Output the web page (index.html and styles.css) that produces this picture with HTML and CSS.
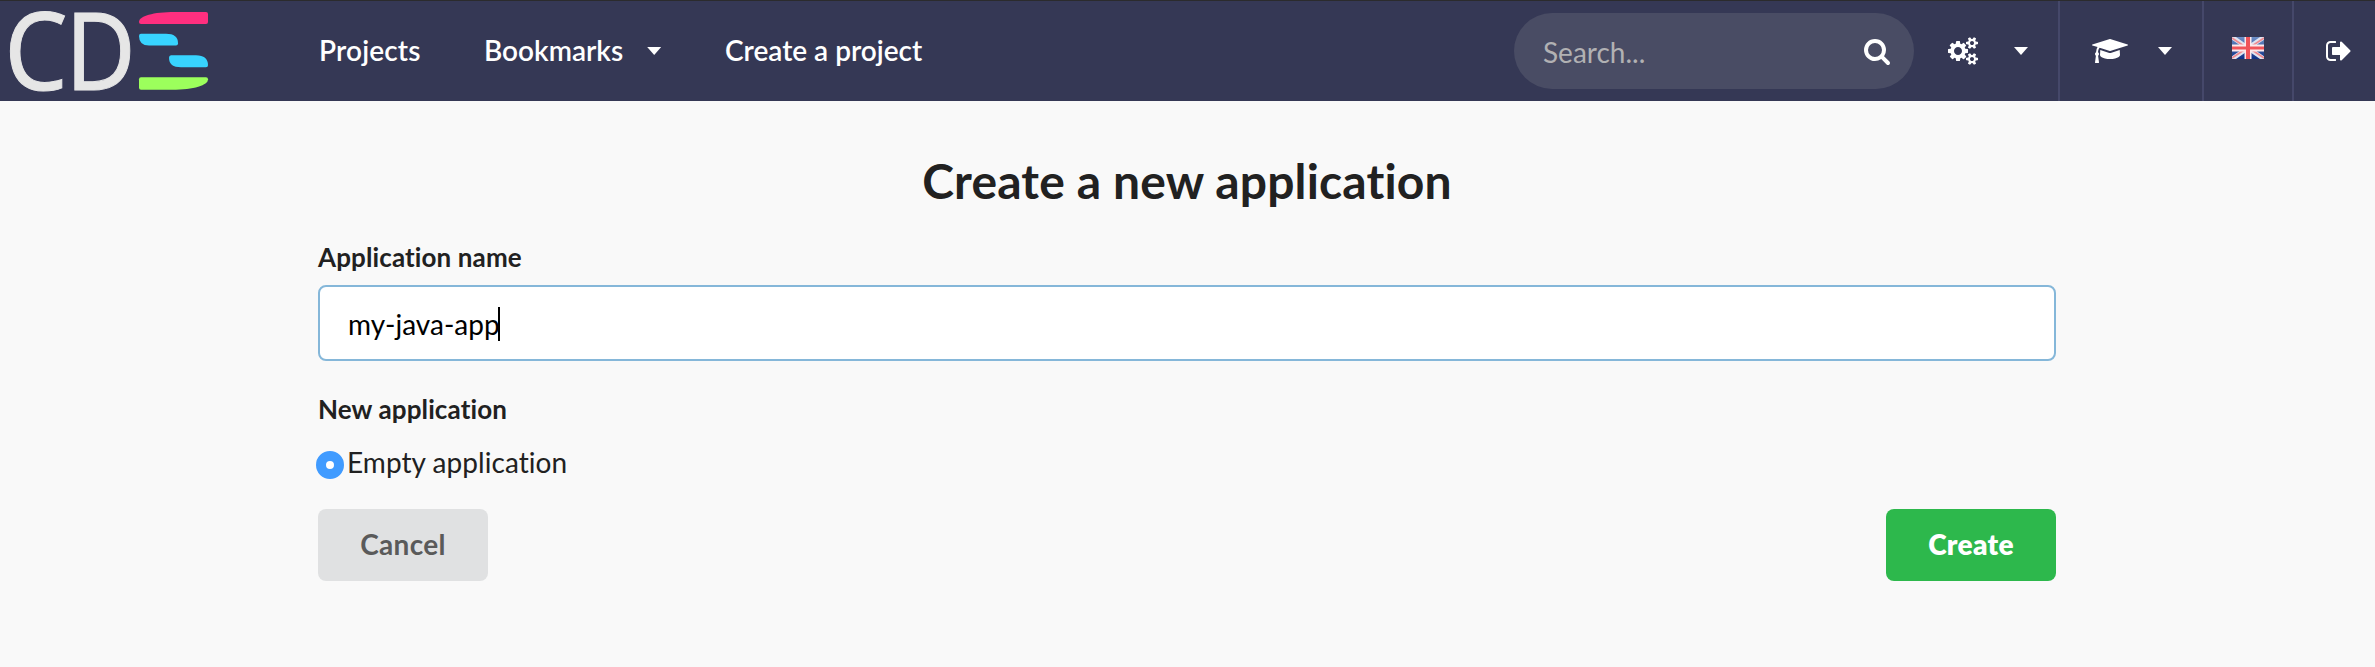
FILE: index.html
```
<!DOCTYPE html>
<html lang="en">
<head>
<meta charset="utf-8">
<title>Create a new application</title>
<link rel="stylesheet" href="styles.css">
</head>
<body>
<nav class="navbar">
  <a class="logo">
    <svg width="230" height="100" viewBox="0 1 230 100" role="img" aria-label="CDE">
      <text class="logo-letter" transform="translate(4.200 89.600) scale(.93 1)">C</text>
      <text class="logo-letter" transform="translate(65.500 89.600) scale(.89 1)">D</text>
      <path fill="#ff2f7f" d="M141 24q-2 0-2-2c0-6 14-10 36-10h31q2 0 2 2v8q0 2-2 2z"/>
      <path fill="#38d4ff" d="M141 33.700h25q12 0 12 9.500q0 2.300-2 2.300h-27q-10 0-10-9.500q0-2.300 2-2.300z"/>
      <path fill="#38d4ff" d="M171 55.300h25q12 0 12 10q0 2-2 2h-25q-12 0-12-9.500q0-2.500 2-2.500z"/>
      <path fill="#9cff5c" d="M141 77.300h65q2 0 2 2c0 6-14 10.500-36 10.500h-31q-2 0-2-2v-8.500q0-2 2-2z"/>
    </svg>
  </a>
  <div class="menu">
    <a class="item projects">Projects</a>
    <a class="item bookmarks">Bookmarks <i class="caret"></i></a>
    <a class="item create">Create a project</a>
  </div>
  <div class="menu-right">
    <div class="search">
      <span class="placeholder">Search...</span>
      <svg class="icon" width="28" height="28" viewBox="0 0 1792 1792"><path d="M1216 832q0-185-131.500-316.500T768 384 451.500 515.500 320 832t131.500 316.500T768 1280t316.500-131.500T1216 832zm512 832q0 52-38 90t-90 38q-54 0-90-38l-343-342q-179 124-399 124-143 0-273.500-55.500t-225-150-150-225T64 832t55.500-273.500 150-225 225-150T768 128t273.500 55.500 225 150 150 225T1472 832q0 220-124 399l343 343q37 37 37 90z"/></svg>
    </div>
    <a class="tool settings">
      <svg class="icon" width="30" height="28" viewBox="0 0 1920 1792"><path d="M896 896q0-106-75-181t-181-75-181 75-75 181 75 181 181 75 181-75 75-181zm768 512q0-52-38-90t-90-38-90 38-38 90q0 53 37.500 90.500t90.500 37.500 90.500-37.500 37.500-90.500zm0-1024q0-52-38-90t-90-38-90 38-38 90q0 53 37.500 90.500t90.500 37.500 90.500-37.500 37.500-90.500zm-384 421v185q0 10-7 19.500t-16 10.500l-155 24q-11 35-32 76 34 48 90 115 7 11 7 20 0 12-7 19-23 30-82.500 89.500t-78.500 59.500q-11 0-21-7l-115-90q-37 19-77 31-11 108-23 155-7 24-30 24h-186q-11 0-20-7.500t-10-17.500l-23-153q-34-10-75-31l-118 89q-7 7-20 7-11 0-21-8-144-133-144-160 0-9 7-19 10-14 41-53t47-61q-23-44-35-82l-152-24q-10-1-17-9.500t-7-19.500v-185q0-10 7-19.500t16-10.500l155-24q11-35 32-76-34-48-90-115-7-11-7-20 0-12 7-20 22-30 82-89t79-59q11 0 21 7l115 90q34-18 77-32 11-108 23-154 7-24 30-24h186q11 0 20 7.500t10 17.500l23 153q34 10 75 31l118-89q8-7 20-7 11 0 21 8 144 133 144 160 0 8-7 19-12 16-42 54t-45 60q23 48 34 82l152 23q10 2 17 10.500t7 19.500zm640 533v140q0 16-149 31-12 27-30 52 51 113 51 138 0 4-4 7-122 71-124 71-8 0-46-47t-52-68q-20 2-30 2t-30-2q-14 21-52 68t-46 47q-2 0-124-71-4-3-4-7 0-25 51-138-18-25-30-52-149-15-149-31v-140q0-16 149-31 13-29 30-52-51-113-51-138 0-4 4-7 4-2 35-20t59-34 30-16q8 0 46 46.500t52 67.500q20-2 30-2t30 2q51-71 92-112l6-2q4 0 124 70 4 3 4 7 0 25-51 138 17 23 30 52 149 15 149 31zm0-1024v140q0 16-149 31-12 27-30 52 51 113 51 138 0 4-4 7-122 71-124 71-8 0-46-47t-52-68q-20 2-30 2t-30-2q-14 21-52 68t-46 47q-2 0-124-71-4-3-4-7 0-25 51-138-18-25-30-52-149-15-149-31v-140q0-16 149-31 13-29 30-52-51-113-51-138 0-4 4-7 4-2 35-20t59-34 30-16q8 0 46 46.500t52 67.500q20-2 30-2t30 2q51-71 92-112l6-2q4 0 124 70 4 3 4 7 0 25-51 138 17 23 30 52 149 15 149 31z"/></svg>
      <i class="caret"></i>
    </a>
    <a class="tool learn">
      <svg class="icon" width="36" height="28" viewBox="0 0 2304 1792"><path d="M1774 836l18 316q4 69-82 128t-235 93.500-323 34.500-323-34.500-235-93.500-82-128l18-316 574 181q22 7 48 7t48-7zm530-324q0 23-22 31l-1120 352q-4 1-10 1t-10-1L490 689q-43 34-71 111.500T385 979q63 36 63 109 0 69-58 107l58 433q2 14-8 25-9 11-24 11H224q-15 0-24-11-10-11-8-25l58-433q-58-38-58-107 0-73 65-111 11-207 98-330L22 543Q0 535 0 512t22-31l1120-352q4-1 10-1t10 1l1120 352q22 8 22 31z"/></svg>
      <i class="caret"></i>
    </a>
    <a class="tool lang">
      <svg width="32" height="22" viewBox="0 0 32 22">
        <defs>
          <linearGradient id="flag-blue" x2="0" y2="1"><stop offset="0" stop-color="#6d8fc7"/><stop offset="1" stop-color="#0c3086"/></linearGradient>
          <clipPath id="flag-clip"><rect width="32" height="22"/></clipPath>
        </defs>
        <g clip-path="url(#flag-clip)">
          <rect width="32" height="22" fill="url(#flag-blue)"/>
          <path d="M0 0L32 22M32 0L0 22" stroke="#dfe3f0" stroke-width="4.500"/>
          <path d="M0 1L12 9M20 13L32 21M32 1L20 9M12 13L0 21" stroke="#ef8a90" stroke-width="1.800"/>
          <path d="M16 0V22M0 11H32" stroke="#fbe9ec" stroke-width="7"/>
          <path d="M16 0V22" stroke="#f0545a" stroke-width="4"/>
          <path d="M0 11H32" stroke="#f0545a" stroke-width="3"/>
        </g>
      </svg>
    </a>
    <a class="tool logout">
      <svg class="icon" width="28" height="28" viewBox="0 0 1792 1792"><path d="M704 1440q0 4 1 20t.5 26.500-3 23.500-10 19.500T672 1536H352q-119 0-203.500-84.500T64 1248V544q0-119 84.500-203.500T352 256h320q13 0 22.500 9.500T704 288q0 4 1 20t.5 26.500-3 23.500-10 19.500T672 384H352q-66 0-113 47t-47 113v704q0 66 47 113t113 47h312l11.500 1 11.500 3 8 5.500 7 9 2 13.500zm928-544q0 26-19 45l-544 544q-19 19-45 19t-45-19-19-45v-288H512q-26 0-45-19t-19-45V704q0-26 19-45t45-19h448V352q0-26 19-45t45-19 45 19l544 544q19 19 19 45z"/></svg>
    </a>
  </div>
</nav>
<main class="page">
  <h1 class="title">Create a new application</h1>
  <form class="form">
    <div class="label">Application name</div>
    <div class="input"><span>my-java-app</span><i class="cursor"></i></div>
    <div class="label second">New application</div>
    <div class="option"><i class="radio"></i><span class="option-text">Empty application</span></div>
    <div class="actions">
      <button type="button" class="button cancel">Cancel</button>
      <button type="button" class="button submit">Create</button>
    </div>
  </form>
</main>
</body>
</html>
```
FILE: styles.css
```
* { box-sizing: border-box; }
body {
  margin: 0;
  min-height: 667px;
  background: #f9f9f9;
  color: #212121;
  font: 28px/40px Lato, sans-serif;
  font-variant-ligatures: none;
}
svg { display: block; flex: none; overflow: visible; }
.navbar {
  display: flex;
  height: 101px;
  border-top: 1px solid #2b2b2d;
  background: #353855;
  color: #fff;
}
.logo { width: 230px; }
.logo-letter {
  font: 108px "Noto Sans", sans-serif;
  fill: #e6e6e6;
  stroke: #e6e6e6;
  stroke-width: 1;
}
.menu { display: flex; flex: 1; padding-left: 89px; }
.item {
  display: flex;
  align-items: center;
  padding-bottom: 2px;
  white-space: nowrap;
  font-weight: 600;
}
.projects { width: 165px; letter-spacing: .15px; }
.bookmarks { width: 241px; }
.bookmarks .caret { margin: 2px 0 0 24px; }
.caret {
  width: 14px;
  height: 8px;
  background: #fff;
  clip-path: polygon(0 0, 100% 0, 50% 100%);
}
.menu-right { display: flex; align-items: center; }
.icon { fill: #fff; }
.search {
  display: flex;
  align-items: center;
  justify-content: space-between;
  width: 400px;
  height: 76px;
  padding: 2px 23px 0 29px;
  border-radius: 38px;
  background: #494c64;
  color: #b1b1b3;
}
.search .icon { margin-top: -2px; }
.tool { display: flex; align-items: center; height: 100px; }
.tool + .tool { border-left: 2px solid #45486a; }
.settings { width: 144px; padding-left: 34px; }
.settings .caret { margin-left: 36px; }
.learn { width: 144px; padding-left: 32px; }
.learn .caret { margin-left: 30px; }
.lang { width: 90px; padding: 0 0 6px 28px; }
.logout { width: 83px; padding-left: 31px; }
.page { width: 1738px; margin: 0 0 0 318px; padding-top: 49px; }
.title {
  margin: 0;
  text-align: center;
  font-size: 48px;
  line-height: 62px;
  font-weight: 700;
  letter-spacing: .15px;
}
.label {
  margin-top: 25px;
  font-size: 26px;
  line-height: 40px;
  font-weight: 700;
  letter-spacing: .12px;
}
.input {
  display: flex;
  align-items: center;
  height: 76px;
  margin-top: 8px;
  padding: 2px 0 0 28px;
  border: 2px solid #85b7d9;
  border-radius: 8px;
  background: #fff;
  color: #000;
}
.cursor { width: 2px; height: 34px; margin: 0 0 0 -2px; background: #000; }
.label.second { margin-top: 28px; }
.option { display: flex; align-items: center; height: 40px; margin: 14px 0 0 -2px; }
.option-text { padding-bottom: 2px; letter-spacing: .05px; }
.radio {
  width: 28px;
  height: 28px;
  margin: 3px 3px 0 0;
  border: 10px solid #409bff;
  border-radius: 50%;
  background: #fff;
}
.actions { display: flex; justify-content: space-between; margin-top: 26px; }
.button {
  width: 170px;
  height: 72px;
  padding: 0 0 2px;
  border: 0;
  border-radius: 8px;
  font: 700 28px/70px Lato, sans-serif;
  letter-spacing: .3px;
}
.cancel { background: #e0e1e2; color: #5a5a5a; }
.submit { background: #2db84c; color: #fff; font-weight: 800; }
```
